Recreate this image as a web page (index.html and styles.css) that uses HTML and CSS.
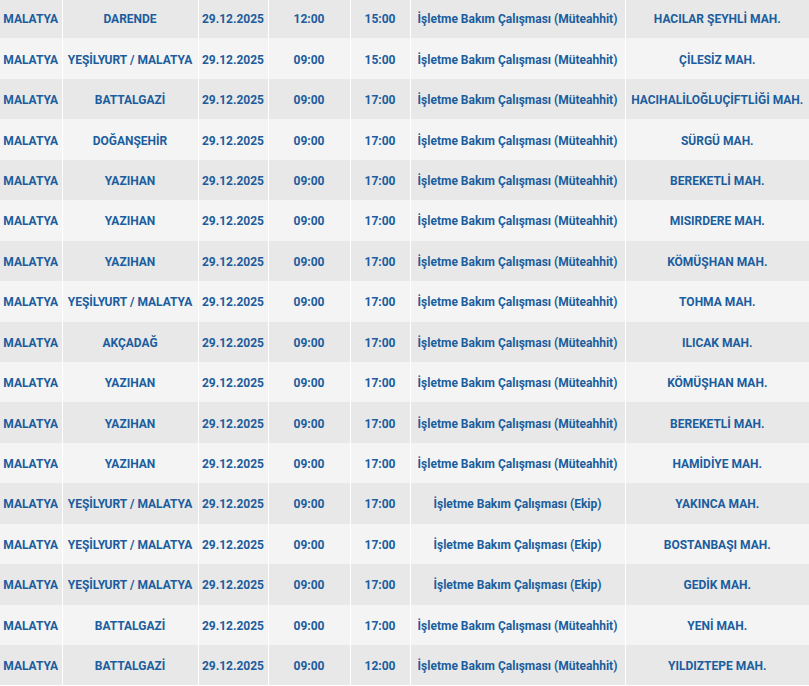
FILE: index.html
```html
<!DOCTYPE html>
<html lang="tr">
<head>
<meta charset="utf-8">
<link rel="stylesheet" href="styles.css">
</head>
<body>
<table class="outage">
<colgroup>
<col class="c1"><col class="c2"><col class="c3"><col class="c4"><col class="c5"><col class="c6"><col class="c7">
</colgroup>
<tbody>
<tr><td>MALATYA</td><td>DARENDE</td><td>29.12.2025</td><td>12:00</td><td>15:00</td><td>İşletme Bakım Çalışması (Müteahhit)</td><td>HACILAR ŞEYHLİ MAH.</td></tr>
<tr><td>MALATYA</td><td>YEŞİLYURT / MALATYA</td><td>29.12.2025</td><td>09:00</td><td>15:00</td><td>İşletme Bakım Çalışması (Müteahhit)</td><td>ÇİLESİZ MAH.</td></tr>
<tr><td>MALATYA</td><td>BATTALGAZİ</td><td>29.12.2025</td><td>09:00</td><td>17:00</td><td>İşletme Bakım Çalışması (Müteahhit)</td><td>HACIHALİLOĞLUÇİFTLİĞİ MAH.</td></tr>
<tr><td>MALATYA</td><td>DOĞANŞEHİR</td><td>29.12.2025</td><td>09:00</td><td>17:00</td><td>İşletme Bakım Çalışması (Müteahhit)</td><td>SÜRGÜ MAH.</td></tr>
<tr><td>MALATYA</td><td>YAZIHAN</td><td>29.12.2025</td><td>09:00</td><td>17:00</td><td>İşletme Bakım Çalışması (Müteahhit)</td><td>BEREKETLİ MAH.</td></tr>
<tr><td>MALATYA</td><td>YAZIHAN</td><td>29.12.2025</td><td>09:00</td><td>17:00</td><td>İşletme Bakım Çalışması (Müteahhit)</td><td>MISIRDERE MAH.</td></tr>
<tr><td>MALATYA</td><td>YAZIHAN</td><td>29.12.2025</td><td>09:00</td><td>17:00</td><td>İşletme Bakım Çalışması (Müteahhit)</td><td>KÖMÜŞHAN MAH.</td></tr>
<tr><td>MALATYA</td><td>YEŞİLYURT / MALATYA</td><td>29.12.2025</td><td>09:00</td><td>17:00</td><td>İşletme Bakım Çalışması (Müteahhit)</td><td>TOHMA MAH.</td></tr>
<tr><td>MALATYA</td><td>AKÇADAĞ</td><td>29.12.2025</td><td>09:00</td><td>17:00</td><td>İşletme Bakım Çalışması (Müteahhit)</td><td>ILICAK MAH.</td></tr>
<tr><td>MALATYA</td><td>YAZIHAN</td><td>29.12.2025</td><td>09:00</td><td>17:00</td><td>İşletme Bakım Çalışması (Müteahhit)</td><td>KÖMÜŞHAN MAH.</td></tr>
<tr><td>MALATYA</td><td>YAZIHAN</td><td>29.12.2025</td><td>09:00</td><td>17:00</td><td>İşletme Bakım Çalışması (Müteahhit)</td><td>BEREKETLİ MAH.</td></tr>
<tr><td>MALATYA</td><td>YAZIHAN</td><td>29.12.2025</td><td>09:00</td><td>17:00</td><td>İşletme Bakım Çalışması (Müteahhit)</td><td>HAMİDİYE MAH.</td></tr>
<tr><td>MALATYA</td><td>YEŞİLYURT / MALATYA</td><td>29.12.2025</td><td>09:00</td><td>17:00</td><td>İşletme Bakım Çalışması (Ekip)</td><td>YAKINCA MAH.</td></tr>
<tr><td>MALATYA</td><td>YEŞİLYURT / MALATYA</td><td>29.12.2025</td><td>09:00</td><td>17:00</td><td>İşletme Bakım Çalışması (Ekip)</td><td>BOSTANBAŞI MAH.</td></tr>
<tr><td>MALATYA</td><td>YEŞİLYURT / MALATYA</td><td>29.12.2025</td><td>09:00</td><td>17:00</td><td>İşletme Bakım Çalışması (Ekip)</td><td>GEDİK MAH.</td></tr>
<tr><td>MALATYA</td><td>BATTALGAZİ</td><td>29.12.2025</td><td>09:00</td><td>17:00</td><td>İşletme Bakım Çalışması (Müteahhit)</td><td>YENİ MAH.</td></tr>
<tr><td>MALATYA</td><td>BATTALGAZİ</td><td>29.12.2025</td><td>09:00</td><td>12:00</td><td>İşletme Bakım Çalışması (Müteahhit)</td><td>YILDIZTEPE MAH.</td></tr>
</tbody>
</table>
</body>
</html>
```
FILE: styles.css
```css
html, body {
  margin: 0;
  padding: 0;
  background: #ffffff;
  overflow: hidden;
}
.outage {
  width: 809px;
  margin-top: -2px;
  border-collapse: collapse;
  table-layout: fixed;
  font-family: Roboto, "Noto Sans", sans-serif;
  font-size: 12px;
  font-weight: 700;
  color: #1b5d9d;
}
.c1 { width: 62px; }
.c2 { width: 136px; }
.c3 { width: 70px; }
.c4 { width: 82px; }
.c5 { width: 60px; }
.c6 { width: 215px; }
.c7 { width: 184px; }
.outage tr { height: 40.44px; }
.outage tr:nth-child(odd) { background: #e8e8e8; }
.outage tr:nth-child(even) { background: #f4f4f4; }
.outage td {
  padding: 2px 0 0;
  text-align: center;
  vertical-align: middle;
  white-space: nowrap;
  border-right: 1px solid #ffffff;
}
.outage td:last-child { border-right: none; }
```
